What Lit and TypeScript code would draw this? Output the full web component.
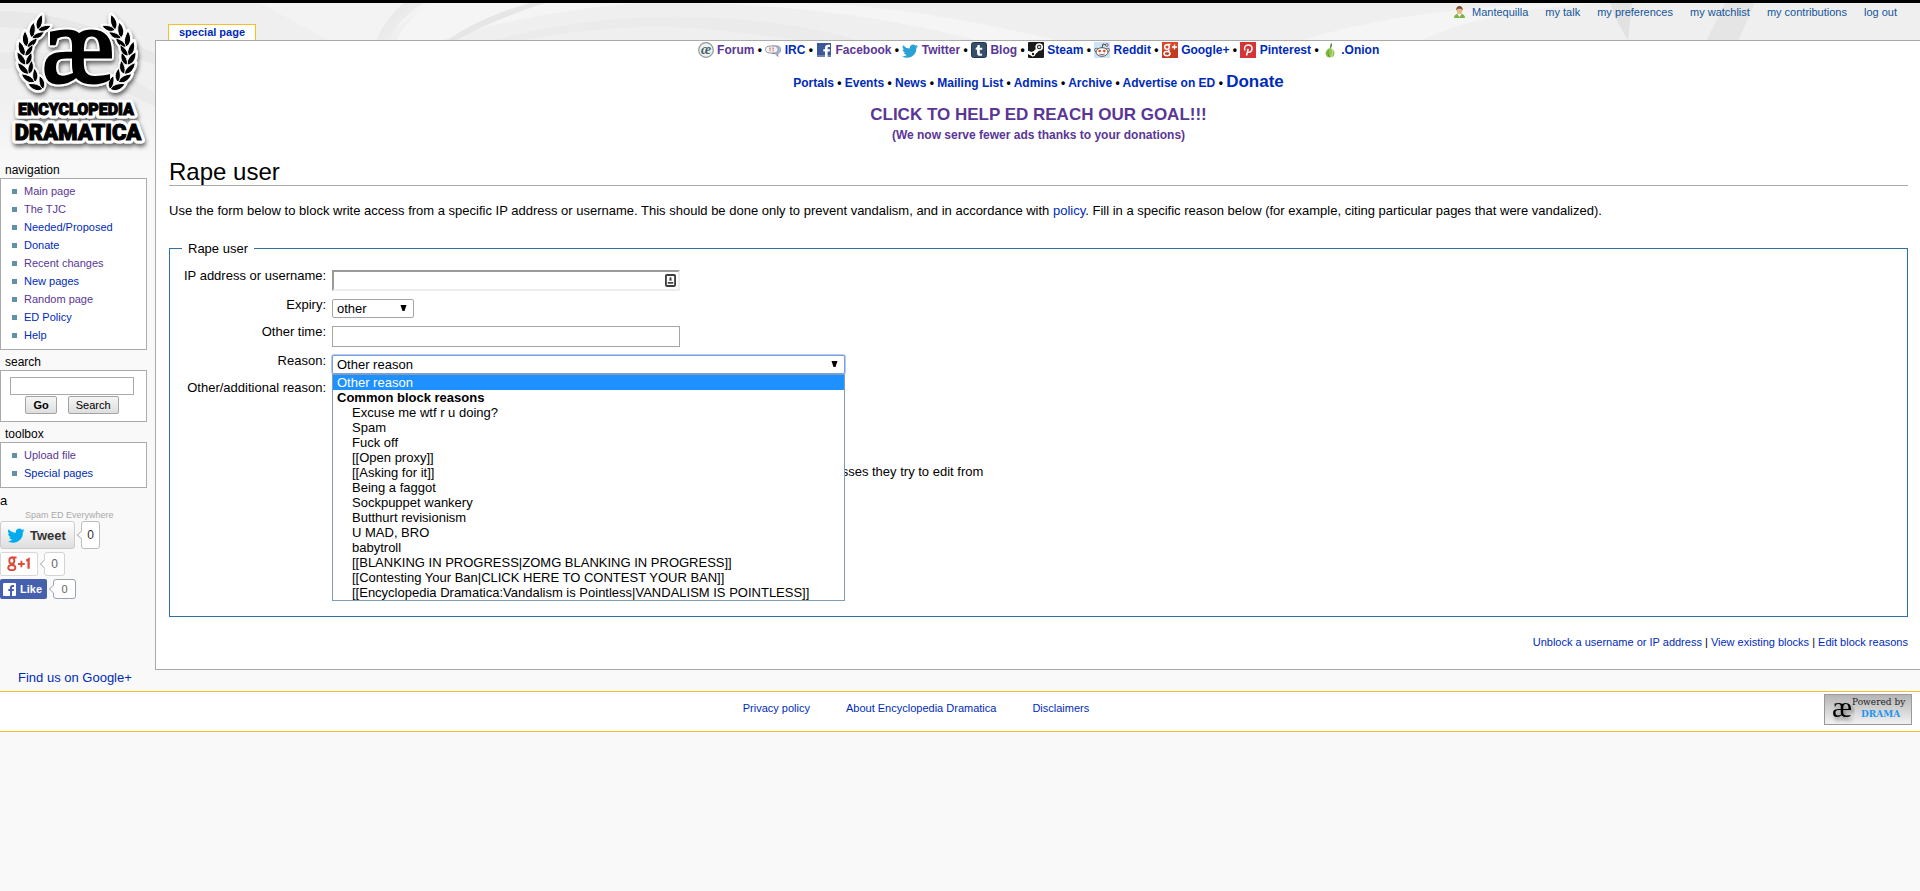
import { LitElement, html, svg, css } from "lit";
import { customElement } from "lit/decorators.js";

interface NavLink {
  text: string;
  visited?: boolean;
}

const NAVIGATION: NavLink[] = [
  { text: "Main page", visited: true },
  { text: "The TJC", visited: true },
  { text: "Needed/Proposed" },
  { text: "Donate" },
  { text: "Recent changes", visited: true },
  { text: "New pages" },
  { text: "Random page", visited: true },
  { text: "ED Policy" },
  { text: "Help" },
];

const TOOLBOX: NavLink[] = [{ text: "Upload file", visited: true }, { text: "Special pages" }];

const PERSONAL = ["my talk", "my preferences", "my watchlist", "my contributions", "log out"];

const PORTALS = ["Portals", "Events", "News", "Mailing List", "Admins", "Archive", "Advertise on ED"];

const REASONS = [
  "Excuse me wtf r u doing?",
  "Spam",
  "Fuck off",
  "[[Open proxy]]",
  "[[Asking for it]]",
  "Being a faggot",
  "Sockpuppet wankery",
  "Butthurt revisionism",
  "U MAD, BRO",
  "babytroll",
  "[[BLANKING IN PROGRESS|ZOMG BLANKING IN PROGRESS]]",
  "[[Contesting Your Ban|CLICK HERE TO CONTEST YOUR BAN]]",
  "[[Encyclopedia Dramatica:Vandalism is Pointless|VANDALISM IS POINTLESS]]",
];

const TWITTER_BIRD =
  "M16 3.1a6.6 6.6 0 0 1-1.9.5A3.300 3.300 0 0 0 15.500 1.800a6.600 6.600 0 0 1-2.100.8A3.280 3.280 0 0 0 7.800 5.600 9.300 9.300 0 0 1 1.100 2.200a3.280 3.280 0 0 0 1 4.400 3.300 3.300 0 0 1-1.500-.4c0 1.600 1.100 2.900 2.600 3.300a3.300 3.300 0 0 1-1.500.1c.4 1.300 1.600 2.200 3.100 2.300A6.600 6.600 0 0 1 0 13.200 9.300 9.300 0 0 0 14.400 4.900 6.700 6.700 0 0 0 16 3.100z";

const ICONS = {
  forum: svg`
    <circle cx="8" cy="8" r="7.300" fill="#eef1f1" stroke="#8d9797" stroke-width="1.200" />
    <text x="8" y="11.500" text-anchor="middle" font-family="Liberation Serif, serif" font-size="14" font-weight="700" font-style="italic" fill="#3f5f68">æ</text>`,
  irc: svg`
    <path d="M7 4h5c2.500 0 3.500 1.500 3.500 3.700S14.500 11.500 12.500 11.500l.5 3-3-3H7z" fill="#a9bfe6" stroke="#7486a8" stroke-width=".8" />
    <path d="M5 4h4c2.500 0 4 1.500 4 3.500S11.500 11 9 11H5C2 11 .5 9.500 .5 7.500S2 4 5 4z" fill="#f4f4f6" stroke="#8c8c96" stroke-width=".9" />
    <path d="M4.500 5.500h1.200v2H4.500zM7.500 5.500h1.200v2H7.500zM4.500 8.300h1.200v1H4.500zM7.500 8.300h1.200v1H7.500z" fill="#c4605c" />`,
  facebook: svg`
    <rect x="1" y="1" width="14" height="14" fill="#3b5998" />
    <path d="M1 13h14v2H1z" fill="#6d84b4" />
    <path d="M9 15V9.500H7.300V7.300H9V6c0-2 1-3.200 3.200-3.200H14v2.200h-1.200c-1 0-1.200.4-1.200 1.200v1.100H14l-.3 2.200h-2.100V15z" fill="#fff" />`,
  twitter: svg`<path transform="translate(0 1)" d=${TWITTER_BIRD} fill="#2ba0d4" />`,
  tumblr: svg`
    <rect x=".5" y=".5" width="15" height="15" rx="2" fill="#35506b" stroke="#22374c" />
    <path d="M6.700 3h2.100v2.700h2.500v2H8.800v3.100c0 1.200 1 1.200 2.300.6v2c-2.500 1-5 .4-5-2.200V7.700H4.700V6C6 5.600 6.500 4.600 6.700 3z" fill="#fff" />`,
  steam: svg`
    <rect width="16" height="16" rx="1" fill="#1d1b1a" />
    <path d="M0 8.800l4.500 1.400 3.300-3.200 3.400 1.600-3.600 3.400-3 2.400L0 12z" fill="#fff" />
    <circle cx="11.200" cy="5" r="3" fill="#1d1b1a" stroke="#fff" stroke-width="1.600" />
    <circle cx="11.200" cy="5" r="1.300" fill="#ddd" />
    <circle cx="5" cy="12" r="1.800" fill="#1d1b1a" stroke="#fff" stroke-width="1.200" />`,
  reddit: svg`
    <rect width="16" height="16" fill="#cee3f8" />
    <path d="M8 6l1-4 3 .8" fill="none" stroke="#444" />
    <circle cx="12.800" cy="3" r="1.300" fill="#fff" stroke="#444" stroke-width=".8" />
    <circle cx="2.300" cy="8" r="1.700" fill="#fff" stroke="#444" stroke-width=".8" />
    <circle cx="13.700" cy="8" r="1.700" fill="#fff" stroke="#444" stroke-width=".8" />
    <ellipse cx="8" cy="10" rx="6" ry="4.300" fill="#fff" stroke="#444" stroke-width=".9" />
    <circle cx="5.700" cy="9" r="1.300" fill="#f03a17" /><circle cx="10.300" cy="9" r="1.300" fill="#f03a17" />
    <path d="M5.300 11.800c1.500 1.200 4 1.200 5.400 0" fill="none" stroke="#444" stroke-width=".8" />`,
  gplus: svg`
    <rect width="16" height="16" fill="#d6492f" />
    <path d="M0 10l16-4v10H0z" fill="#c23a22" />
    <circle cx="5" cy="5" r="2.300" fill="none" stroke="#fff" stroke-width="1.500" />
    <ellipse cx="5" cy="11.600" rx="3" ry="2.200" fill="none" stroke="#fff" stroke-width="1.500" />
    <path d="M5 2.400h3.500M6 7.500l1.500 2M12.500 2.500v5M10 5h5" stroke="#fff" stroke-width="1.400" fill="none" />`,
  pinterest: svg`
    <rect width="16" height="16" fill="#d43638" />
    <path d="M6.500 13.500l1.700-6.800M5 8.500C3.500 5.500 5.500 3 8.300 3c2.500 0 4 1.600 3.700 3.800-.3 2.400-1.700 3.600-3.200 3.400-.9-.1-1.400-.7-1.300-1.300" fill="none" stroke="#fff" stroke-width="1.500" />`,
  onion: svg`
    <path d="M9 2c-.3 2-.6 2.800-1.300 3.900C5 7.400 3.500 8.700 3.500 11.200 3.500 14 5.500 15.600 8 15.600s4.500-1.600 4.500-4.400c0-2.500-1.500-3.800-3.500-5.300.2-1 .3-2 .9-3.200z" fill="#8fc34d" />
    <path d="M8 6c-2 2-2.700 6 0 9.300C5 14 4.600 9 8 6z" fill="#3f7d1e" />
    <path d="M9 6c2 2.500 2 6 0 9" fill="none" stroke="#d7ecc0" stroke-width=".9" />
    <path d="M8 5.500L9 1l1 1-.7 3.500z" fill="#55732f" />`,
};

const SOCIAL: { icon: keyof typeof ICONS; text: string; visited?: boolean }[] = [
  { icon: "forum", text: "Forum", visited: true },
  { icon: "irc", text: "IRC" },
  { icon: "facebook", text: "Facebook", visited: true },
  { icon: "twitter", text: "Twitter", visited: true },
  { icon: "tumblr", text: "Blog", visited: true },
  { icon: "steam", text: "Steam" },
  { icon: "reddit", text: "Reddit" },
  { icon: "gplus", text: "Google+" },
  { icon: "pinterest", text: "Pinterest" },
  { icon: "onion", text: ".Onion" },
];

/* Stem points of the left laurel branch, from tip to base: x, y, direction in degrees. */
const LAUREL = [
  [38, 27, -50],
  [32, 35, -58],
  [27, 44, -72],
  [25, 53, -86],
  [26, 62, -98],
  [29, 71, -110],
  [35, 79, -124],
  [43, 86, -136],
];

const LEAF = "M0 0C3-5.500 10-6 16-2 11 1.500 4 3 0 0z";

const branch = svg`
  ${LAUREL.map(
    ([x, y, angle]) => svg`
      <path d=${LEAF} transform="translate(${x} ${y}) rotate(${angle - 18})" />
      <path d=${LEAF} transform="translate(${x} ${y}) rotate(${angle + 24}) scale(.85 -.85)" />`
  )}`;

const link = (item: NavLink) =>
  html`<li><a href="#" class=${item.visited ? "visited" : ""}>${item.text}</a></li>`;

@customElement("ed-sidebar")
export class EdSidebar extends LitElement {
  static styles = css`
    :host {
      display: block;
      font: 13px/19px "Liberation Sans", Arial, sans-serif;
      color: #000;
    }
    a {
      color: #002bb8;
      text-decoration: none;
    }
    a.visited {
      color: #5a3696;
    }
    .logo {
      display: block;
      height: 155px;
    }
    .logo svg {
      display: block;
    }
    .logo-ae,
    .logo-name {
      fill: #000;
      stroke: #000;
      text-anchor: middle;
    }
    .logo-ae {
      font: 108px "Liberation Serif", serif;
      stroke-width: 3px;
    }
    .logo-name {
      font-family: Roboto, "Liberation Sans", sans-serif;
      font-weight: 900;
      stroke-width: 1px;
    }
    .logo-top {
      font-size: 16px;
    }
    .logo-bottom {
      font-size: 22px;
    }
    .halo {
      stroke: #fff;
      stroke-width: 7px;
      stroke-linejoin: round;
      fill: #fff;
    }
    .halo-thin {
      stroke-width: 4px;
    }
    .branch {
      stroke: #fff;
      stroke-width: 1px;
    }
    h2 {
      margin: 0;
      padding: 4px 0 0 5px;
      font: 12px/16px "Liberation Sans", Arial, sans-serif;
    }
    .box {
      width: 145px;
      border: 1px solid #aaa;
      background: #fff;
      font-size: 11px;
      line-height: 18px;
    }
    ul {
      margin: 0;
      padding: 3px 0 5px 23px;
      list-style: none;
    }
    li::before {
      content: "";
      float: left;
      width: 5px;
      height: 5px;
      margin: 7px 0 0 -12px;
      background: #6390a4;
    }
    form {
      display: flex;
      flex-wrap: wrap;
      justify-content: center;
      gap: 1px 11px;
      padding: 6px 12px 7px 9px;
    }
    .query {
      box-sizing: border-box;
      width: 100%;
      height: 18px;
      padding: 0 2px;
      border: 1px solid #aaa;
      font: 12px "Liberation Sans", Arial, sans-serif;
    }
    form button {
      box-sizing: border-box;
      height: 18px;
      padding: 0 7px;
      border: 1px solid #a3a3a3;
      border-radius: 2px;
      background: linear-gradient(#f6f6f6, #dedede);
      font: 11px/14px "Liberation Sans", Arial, sans-serif;
      color: #000;
    }
    form .go {
      font-weight: 700;
    }
    .note {
      margin: 3px 0 0;
    }
    .spam {
      margin: 0;
      padding-left: 25px;
      font-size: 9px;
      line-height: 11px;
      color: #aaa;
    }
    .share {
      display: flex;
      align-items: center;
      gap: 6px;
      margin-bottom: 3px;
    }
    .share button {
      display: flex;
      align-items: center;
      box-sizing: border-box;
      margin: 0;
    }
    .tweet {
      gap: 5px;
      height: 28px;
      width: 75px;
      padding: 0 6px;
      border: 1px solid #ccc;
      border-radius: 3px;
      background: linear-gradient(#fff, #dedede);
      font: bold 13px "Liberation Sans", sans-serif;
      color: #333;
    }
    .plus {
      height: 24px;
      width: 38px;
      padding: 0 6px;
      border: 1px solid #d9d9d9;
      border-radius: 2px;
      background: #fff;
      color: #dd4b39;
    }
    .like {
      gap: 4px;
      height: 20px;
      width: 47px;
      padding: 0 3px;
      border: 0;
      border-radius: 2px;
      background: #4460ae;
      font: bold 11px "Liberation Sans", sans-serif;
      color: #fff;
    }
    .count {
      position: relative;
      box-sizing: border-box;
      border: 1px solid #bbb;
      border-radius: 3px;
      background: #fff;
      text-align: center;
      font-size: 12px;
      color: #333;
    }
    .count::before {
      content: "";
      position: absolute;
      top: 50%;
      left: -4px;
      width: 5px;
      height: 5px;
      margin-top: -3px;
      border: solid #bbb;
      border-width: 0 0 1px 1px;
      background: #fff;
      transform: rotate(45deg);
    }
    .count-tweet {
      width: 19px;
      height: 28px;
      line-height: 26px;
    }
    .count-plus {
      width: 21px;
      height: 24px;
      line-height: 22px;
      border-color: #d3d3d3;
      color: #666;
    }
    .count-like {
      width: 23px;
      height: 20px;
      line-height: 18px;
      border-color: #9aa0b5;
      font-size: 11px;
      color: #666;
    }
    .find {
      margin: 69px 0 4px;
      padding-left: 18px;
    }
  `;

  render() {
    const name = (cls: string) => svg`
      <text class="logo-name logo-top ${cls}" x="76" y="112">ENCYCLOPEDIA</text>
      <text class="logo-name logo-bottom ${cls}" x="78" y="137">DRAMATICA</text>`;
    return html`
      <a class="logo" href="#" aria-label="Encyclopedia Dramatica">
        <svg width="154" height="155" viewBox="0 0 154 155">
          <defs>
            <filter id="shadow" x="-10%" y="-10%" width="120%" height="125%">
              <feDropShadow dx="1" dy="3" stdDeviation="2" flood-color="#000" flood-opacity=".6" />
            </filter>
          </defs>
          <g filter="url(#shadow)">
            <g class="halo halo-thin">
              ${branch}
              <g transform="translate(153 0) scale(-1 1)">${branch}</g>
            </g>
            <text class="logo-ae halo" x="78" y="79">æ</text>
            <g aria-hidden="true">${name("halo")}</g>
          </g>
          <g class="branch">
            ${branch}
            <g transform="translate(153 0) scale(-1 1)">${branch}</g>
          </g>
          <text class="logo-ae" x="78" y="79">æ</text>
          ${name("")}
        </svg>
      </a>

      <h2>navigation</h2>
      <nav class="box"><ul>${NAVIGATION.map(link)}</ul></nav>

      <h2>search</h2>
      <div class="box">
        <form @submit=${(e: Event) => e.preventDefault()}>
          <input class="query" type="search" aria-label="search" />
          <button class="go">Go</button>
          <button>Search</button>
        </form>
      </div>

      <h2>toolbox</h2>
      <nav class="box"><ul>${TOOLBOX.map(link)}</ul></nav>

      <p class="note">a</p>
      <p class="spam">Spam ED Everywhere</p>
      <div class="share">
        <button class="tweet">
          <svg width="18" height="16" viewBox="0 0 16 15"><path d=${TWITTER_BIRD} fill="#00aced" /></svg>Tweet
        </button>
        <span class="count count-tweet">0</span>
      </div>
      <div class="share">
        <button class="plus" aria-label="+1">
          <svg width="25" height="16" viewBox="0 0 25 16" fill="none" stroke="#dd4b39">
            <ellipse cx="5" cy="4.500" rx="2.600" ry="3.200" stroke-width="2" />
            <ellipse cx="5" cy="11.800" rx="3.700" ry="2.600" stroke-width="2" />
            <path d="M5 1.300h5M4 7.500l3.500 2M15 4.500v7M11.500 8h7" stroke-width="2" />
            <path d="M20 4.500l2.500-1.500v10" stroke-width="2.400" />
          </svg>
        </button>
        <span class="count count-plus">0</span>
      </div>
      <div class="share">
        <button class="like">
          <svg width="13" height="13" viewBox="0 0 13 13">
            <rect width="13" height="13" rx="1" fill="#fff" />
            <path d="M7 13V8H5.300V6H7V4.700C7 3 8 2 9.700 2H11v2h-1c-.8 0-1 .3-1 1v1h2l-.3 2H9v5z" fill="#4460ae" />
          </svg>Like
        </button>
        <span class="count count-like">0</span>
      </div>
      <p class="find"><a href="#">Find us on Google+</a></p>
    `;
  }
}

@customElement("ed-block-form")
export class EdBlockForm extends LitElement {
  static styles = css`
    :host {
      display: block;
      font: 13px/15px "Liberation Sans", Arial, sans-serif;
    }
    fieldset {
      margin: 0;
      padding: 14px 15px 0 14px;
      border: 1px solid #2f6fab;
    }
    legend {
      margin-left: -2px;
      padding: 0 6px;
    }
    .rows {
      display: grid;
      grid-template-columns: 142px minmax(0, 1fr);
      gap: 8px 6px;
      min-height: 346px;
      align-content: start;
    }
    .rows > label {
      text-align: right;
      line-height: 12px;
      white-space: nowrap;
    }
    .field {
      position: relative;
      width: 348px;
      max-width: 100%;
    }
    input[type="text"] {
      display: block;
      box-sizing: border-box;
      width: 100%;
      height: 21px;
      padding: 1px 3px;
      border: 1px solid #a6a6a6;
      font: 13px "Liberation Sans", Arial, sans-serif;
    }
    input[type="text"].inset {
      border: 2px solid;
      border-color: #9a9a9a #eee #eee #9a9a9a;
    }
    .card {
      position: absolute;
      right: 4px;
      top: 4px;
    }
    select {
      display: block;
      box-sizing: border-box;
      height: 19px;
      padding: 0 4px;
      border: 1px solid #a6a6a6;
      border-radius: 2px;
      appearance: none;
      background: #fff
        url("data:image/svg+xml,%3Csvg xmlns='http://www.w3.org/2000/svg' width='7' height='7'%3E%3Cpath d='M0.500 0h6L4.500 6h-2z'/%3E%3C/svg%3E")
        no-repeat right 6px top 5px;
      font: 13px "Liberation Sans", Arial, sans-serif;
      color: #000;
    }
    .expiry {
      width: 82px;
    }
    .reason {
      position: relative;
      width: 513px;
      max-width: 100%;
    }
    .reason select {
      width: 100%;
      border-color: #7e9fdc;
      box-shadow: 0 0 0 1px #b3cbf7;
    }
    .menu {
      position: absolute;
      z-index: 1;
      top: 19px;
      left: 0;
      box-sizing: border-box;
      width: 100%;
      margin: 0;
      padding: 0;
      border: 1px solid #7f9db9;
      background: #fff;
      list-style: none;
      white-space: nowrap;
    }
    .menu li {
      padding: 0 4px 0 19px;
    }
    .menu .current,
    .menu .group {
      padding-left: 4px;
    }
    .menu .current {
      background: #1e90ff;
      color: #fff;
    }
    .menu .group {
      font-weight: 700;
    }
    .option {
      grid-column: 2;
      display: flex;
      align-items: center;
      gap: 12px;
      padding-top: 62px;
    }
    .option input {
      margin: 0;
      width: 13px;
      height: 13px;
    }
  `;

  render() {
    return html`
      <fieldset>
        <legend>Rape user</legend>
        <div class="rows">
          <label for="target">IP address or username:</label>
          <div class="field">
            <input id="target" class="inset" type="text" />
            <svg class="card" width="11" height="13" viewBox="0 0 12 14">
              <rect x="1" y="1" width="10" height="12" rx="1" fill="#fff" stroke="#3c3c3c" stroke-width="2" />
              <path d="M5 3.500h2v2l1 1.500H4l1-1.500zM3 8.500h6v2H3z" fill="#444" />
            </svg>
          </div>

          <label for="expiry">Expiry:</label>
          <div><select id="expiry" class="expiry"><option>other</option></select></div>

          <label for="time">Other time:</label>
          <div class="field"><input id="time" type="text" /></div>

          <label for="reason">Reason:</label>
          <div class="reason">
            <select id="reason">
              <option>Other reason</option>
            </select>
            <ul class="menu" role="listbox" aria-label="Reason">
              <li class="current" role="option" aria-selected="true">Other reason</li>
              <li class="group">Common block reasons</li>
              ${REASONS.map((r) => html`<li role="option">${r}</li>`)}
            </ul>
          </div>

          <label>Other/additional reason:</label>
          <div></div>

          <div class="option">
            <input id="auto" type="checkbox" checked />
            <label for="auto"
              >Automatically block the last IP address used by this user, and any subsequent addresses they try
              to edit from</label
            >
          </div>
        </div>
      </fieldset>
    `;
  }
}

@customElement("app-root")
export class AppRoot extends LitElement {
  static styles = css`
    :host {
      display: block;
      min-height: 100vh;
      font: 13px/19px "Liberation Sans", Arial, sans-serif;
      color: #000;
      background: #f9f9f9;
    }
    a {
      color: #002bb8;
      text-decoration: none;
    }
    a.visited {
      color: #5a3696;
    }
    .page {
      position: relative;
      display: grid;
      grid-template-columns: 155px minmax(0, 1fr);
      border-top: 3px solid #000;
    }
    .swirl {
      position: absolute;
      inset: 0 0 auto 0;
      width: 100%;
      height: 165px;
    }
    ed-sidebar,
    .main {
      position: relative;
    }
    .bar {
      display: flex;
      justify-content: space-between;
      align-items: flex-start;
      height: 37px;
      padding: 0 23px 0 13px;
      font-size: 11px;
    }
    .tab {
      align-self: flex-end;
      height: 15px;
      padding: 0 10px;
      border: 1px solid #fabd23;
      border-bottom: 0;
      background: #fff;
      font-weight: 700;
      line-height: 14px;
    }
    .personal {
      display: flex;
      gap: 17px;
      margin: 0;
      padding: 0;
      list-style: none;
      line-height: 18px;
    }
    .personal a {
      color: #14559b;
    }
    .user {
      display: flex;
      align-items: center;
      gap: 7px;
    }
    .content {
      padding: 0 12px 17px 13px;
      border: 1px solid #aaa;
      border-right: 0;
      background: #fff;
    }
    .notice {
      text-align: center;
      font-size: 12px;
      font-weight: 700;
    }
    .notice p {
      margin: 0;
      line-height: 18px;
    }
    .notice svg {
      vertical-align: -4px;
    }
    .notice .portals {
      margin-top: 11px;
      line-height: 24px;
    }
    .big {
      font-size: 17px;
    }
    .notice .goal {
      margin-top: 10px;
      line-height: 20px;
    }
    h1 {
      margin: 15px 0 0;
      border-bottom: 1px solid #aaa;
      font: 24px/26px "Liberation Sans", Arial, sans-serif;
    }
    .intro {
      margin: 15px 0 21px;
    }
    .tools {
      margin: 16px 0 0;
      text-align: right;
      font-size: 11px;
    }
    footer {
      display: flex;
      align-items: flex-start;
      padding: 2px 8px 6px;
      border: solid #fabd23;
      border-width: 1px 0;
      background: #fff;
      font-size: 11px;
    }
    footer nav {
      flex: 1;
      display: flex;
      justify-content: center;
      gap: 36px;
      padding-top: 5px;
    }
    .badge {
      display: block;
    }
    .badge svg {
      display: block;
    }
  `;

  render() {
    return html`
      <div class="page">
        <svg class="swirl" viewBox="0 0 1920 165" preserveAspectRatio="none" aria-hidden="true">
          <defs>
            <linearGradient id="fade" x1="0" y1="0" x2="0" y2="1">
              <stop offset="0" stop-color="#efefef" />
              <stop offset=".6" stop-color="#f0f0f0" />
              <stop offset="1" stop-color="#f9f9f9" />
            </linearGradient>
            <linearGradient id="soft" x1="0" y1="0" x2="1" y2="1">
              <stop offset="0" stop-color="#e4e4e4" />
              <stop offset="1" stop-color="#f3f3f3" />
            </linearGradient>
          </defs>
          <rect width="1920" height="165" fill="url(#fade)" />
          <path d="M0 8C60 8 110 30 155 50V62C100 40 50 26 0 24z" fill="#e8e8e8" />
          <path d="M0 50C60 44 110 60 155 90V104C100 74 50 62 0 66z" fill="#eaeaea" />
          <path d="M260 0H430L380 38H330z" fill="#f3f3f3" />
          <path d="M404 0H424Q400 14 388 38H376Q386 14 404 0z" fill="url(#soft)" />
          <path d="M430 0H640Q520 10 440 38H396Q410 12 430 0z" fill="#f5f5f5" />
          <path d="M530 0H545Q490 18 455 38H446Q480 14 530 0z" fill="#e6e6e6" />
          <path d="M490 38Q600 10 700 14T860 38H800Q700 22 640 24T520 38z" fill="#ebebeb" />
          <path d="M700 0Q850 4 980 38H1060Q900 0 800 0z" fill="#f5f5f5" />
          <path d="M1300 38Q1400 6 1560 0H1600Q1480 8 1420 38z" fill="#f5f5f5" />
          <path d="M1610 0H1632L1628 38L1616 16z" fill="#e2e2e2" />
          <path d="M1725 0H1755L1738 38H1706z" fill="#e5e5e5" />
        </svg>

        <ed-sidebar></ed-sidebar>

        <div class="main">
          <div class="bar">
            <a class="tab" href="#">special page</a>
            <ul class="personal">
              <li class="user">
                <svg width="11" height="12" viewBox="0 0 11 12">
                  <path d="M0 12c0-3 2-4.500 5.500-4.500S11 9 11 12z" fill="#7cb648" />
                  <path d="M3.500 8l2 3 2-3z" fill="#fff" />
                  <ellipse cx="5.500" cy="4.500" rx="2.800" ry="3.500" fill="#e9b98a" />
                  <path d="M2.300 4.500C2 1 4 0 5.500 0s3.500 1 3.200 4.500C8 3 7 2.700 5.500 2.700S3 3 2.300 4.500z" fill="#7a5230" />
                </svg>
                <a href="#">Mantequilla</a>
              </li>
              ${PERSONAL.map((t) => html`<li><a href="#">${t}</a></li>`)}
            </ul>
          </div>

          <div class="content">
            <div class="notice">
              <p>
                ${SOCIAL.map(
                  (s, i) => html`${i ? " • " : ""}<svg width="16" height="16" viewBox="0 0 16 16">${ICONS[s.icon]}</svg>
                    <a href="#" class=${s.visited ? "visited" : ""}>${s.text}</a>`
                )}
              </p>
              <p class="portals">
                ${PORTALS.map((t) => html`<a href="#">${t}</a> • `)}<a class="big" href="#">Donate</a>
              </p>
              <p class="goal"><a class="big visited" href="#">CLICK TO HELP ED REACH OUR GOAL!!!</a></p>
              <p><a class="visited" href="#">(We now serve fewer ads thanks to your donations)</a></p>
            </div>
            <h1>Rape user</h1>
            <p class="intro">
              Use the form below to block write access from a specific IP address or username. This should be
              done only to prevent vandalism, and in accordance with <a href="#">policy</a>. Fill in a specific
              reason below (for example, citing particular pages that were vandalized).
            </p>
            <ed-block-form></ed-block-form>
            <p class="tools">
              <a href="#">Unblock a username or IP address</a> | <a href="#">View existing blocks</a> |
              <a href="#">Edit block reasons</a>
            </p>
          </div>
        </div>
      </div>

      <footer>
        <nav>
          <a href="#">Privacy policy</a>
          <a href="#">About Encyclopedia Dramatica</a>
          <a href="#">Disclaimers</a>
        </nav>
        <a class="badge" href="#" aria-label="Powered by DRAMA">
          <svg width="88" height="31" viewBox="0 0 88 31">
            <defs>
              <linearGradient id="plate" x1="0" y1="0" x2="0" y2="1">
                <stop offset="0" stop-color="#b4b4b4" />
                <stop offset="1" stop-color="#f2f2f2" />
              </linearGradient>
              <filter id="cast"><feDropShadow dx="2" dy="3" stdDeviation="2" flood-opacity=".5" /></filter>
            </defs>
            <rect x=".5" y=".5" width="87" height="30" fill="url(#plate)" stroke="#999" />
            <text x="8" y="23" font-family="Liberation Serif, serif" font-size="30" filter="url(#cast)">æ</text>
            <text x="28" y="11" font-family="DejaVu Serif, serif" font-size="9" fill="#222">Powered by</text>
            <text x="37" y="23" font-family="DejaVu Serif, serif" font-size="9" font-weight="700" fill="#1e96f0">DRAMA</text>
          </svg>
        </a>
      </footer>
    `;
  }
}
